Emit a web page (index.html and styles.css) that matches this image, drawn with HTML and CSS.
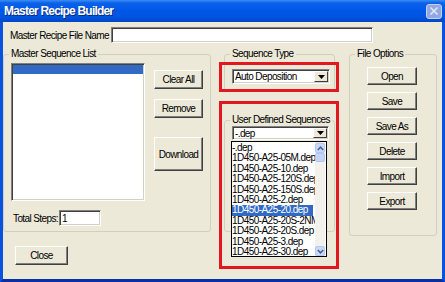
FILE: index.html
```html
<!DOCTYPE html>
<html lang="en">
<head>
  <meta charset="UTF-8" />
  <title>Master Recipe Builder</title>
  <link rel="stylesheet" href="styles.css">
</head>
<body>
  <div class="window">
    <div class="titlebar">
      <span class="title">Master Recipe Builder</span>
      <span class="close-x">
        <svg width="10" height="10" viewBox="0 0 10 10"><path d="M1.5 1.5 L8.5 8.5 M8.5 1.5 L1.5 8.5" stroke="#e2e8f7" stroke-width="1.6" fill="none"/></svg>
      </span>
    </div>

    <div class="frame">
      <div class="name-row">
        <label for="fileName" class="name-label">Master Recipe File Name</label>
        <input type="text" id="fileName" class="field name-field" />
      </div>

      <div class="main">
        <!-- left: sequence list -->
        <fieldset class="group seq-group">
          <legend>Master Sequence List</legend>
          <div class="seq-top">
            <div class="listbox"><div class="list-sel"></div></div>
            <div class="btn-col">
              <button class="btn btn-side">Clear All</button>
              <button class="btn btn-side">Remove</button>
              <button class="btn btn-side btn-tall">Download</button>
            </div>
          </div>
          <div class="steps-row">
            <label for="steps" class="steps-label">Total Steps:</label>
            <input type="text" id="steps" class="field steps-field" value="1" />
          </div>
        </fieldset>

        <!-- middle: type + user sequences -->
        <div class="mid-col">
          <fieldset class="group type-group">
            <legend>Sequence Type</legend>
            <div class="combo type-combo">
              <span class="combo-text">Auto Deposition</span>
              <span class="combo-btn"><svg width="7" height="4" viewBox="0 0 7 4"><path d="M0 0 H7 L3.5 4 Z" fill="#000"/></svg></span>
            </div>
          </fieldset>
          <fieldset class="group user-group">
            <legend>User Defined Sequences</legend>
            <div class="combo user-combo">
              <span class="combo-text">-.dep</span>
              <span class="combo-btn"><svg width="7" height="4" viewBox="0 0 7 4"><path d="M0 0 H7 L3.5 4 Z" fill="#000"/></svg></span>
            </div>
          </fieldset>
        </div>

        <!-- right: file options -->
        <fieldset class="group file-group">
          <legend>File Options</legend>
          <div class="file-btns">
            <button class="btn btn-file">Open</button>
            <button class="btn btn-file">Save</button>
            <button class="btn btn-file">Save As</button>
            <button class="btn btn-file">Delete</button>
            <button class="btn btn-file">Import</button>
            <button class="btn btn-file">Export</button>
          </div>
        </fieldset>
      </div>

      <div class="bottom-row">
        <button class="btn close-btn">Close</button>
      </div>

      <!-- open dropdown of User Defined Sequences -->
      <div class="popup">
        <div class="popup-items">
          <div class="item">-.dep</div>
          <div class="item">1D450-A25-05M.dep</div>
          <div class="item">1D450-A25-10.dep</div>
          <div class="item">1D450-A25-120S.dep</div>
          <div class="item">1D450-A25-150S.dep</div>
          <div class="item">1D450-A25-2.dep</div>
          <div class="item selected">1D450-A25-20.dep</div>
          <div class="item">1D450-A25-20S-2NM.dep</div>
          <div class="item">1D450-A25-20S.dep</div>
          <div class="item">1D450-A25-3.dep</div>
          <div class="item">1D450-A25-30.dep</div>
        </div>
        <div class="scroll">
          <span class="scroll-btn"><svg width="7" height="5" viewBox="0 0 7 5"><path d="M0.8 4 L3.5 1.2 L6.2 4" stroke="#4d6185" stroke-width="1.5" fill="none"/></svg></span>
          <span class="scroll-thumb"></span>
          <span class="scroll-track"></span>
          <span class="scroll-btn"><svg width="7" height="5" viewBox="0 0 7 5"><path d="M0.8 1 L3.5 3.8 L6.2 1" stroke="#4d6185" stroke-width="1.5" fill="none"/></svg></span>
        </div>
      </div>

      <!-- red highlight annotations -->
      <div class="mark mark-type"></div>
      <div class="mark mark-user"></div>
    </div>
  </div>
</body>
</html>
```

FILE: styles.css
```css
* {
  box-sizing: border-box;
}

body {
  margin: 0;
  font-family: "Liberation Sans", Arial, sans-serif;
  font-size: 10px;
  letter-spacing: -0.6px;
  color: #000;
  background: #fff;
}

.window {
  width: 445px;
  height: 282px;
}

/* title bar */
.titlebar {
  height: 22px;
  display: flex;
  align-items: center;
  justify-content: space-between;
  padding: 0 3px 0 4px;
  background: linear-gradient(to bottom, #3d8df5 0, #0a62e8 3px, #0058e8 10px, #0054e0 17px, #0046c6 22px);
  color: #fff;
}

.title {
  font-weight: bold;
  font-size: 12px;
  letter-spacing: -0.8px;
  text-shadow: 1px 1px 0 #0b2a7a;
}

.close-x {
  width: 16px;
  height: 15px;
  display: flex;
  align-items: center;
  justify-content: center;
  background: #93a8e2;
  border: 1px solid #c6d2f2;
  border-radius: 3px;
}

/* dialog body */
.frame {
  position: relative;
  height: 260px;
  background: #ece9d8;
  border: 3px solid #0a52e0;
  border-top: 0;
  border-bottom-color: #0830a6;
  white-space: nowrap;
}

.name-row {
  display: flex;
  align-items: center;
  padding-top: 5px;
  height: 21px;
}

.name-label {
  width: 101px;
  margin-left: 7px;
}

.field {
  margin: 0;
  padding: 0 2px;
  font: inherit;
  letter-spacing: inherit;
  color: #000;
  background: #fff;
  border: 1px solid;
  border-color: #808080 #fff #fff #808080;
  box-shadow: inset 1px 1px 0 #404040, inset -1px -1px 0 #d4d0c8;
  outline: none;
}

.name-field {
  width: 262px;
  height: 16px;
}

.main {
  display: flex;
  align-items: flex-start;
  margin-top: 5px;
}

/* group boxes */
.group {
  margin: 0;
  padding: 0;
  min-width: 0;
  border: 1px solid #d0d0bf;
  border-radius: 3px;
}

.group legend {
  margin-left: 5px;
  padding: 0 2px;
  line-height: 12px;
}

.seq-group {
  width: 208px;
  height: 184px;
}

.seq-top {
  display: flex;
  align-items: flex-start;
}

.listbox {
  width: 134px;
  height: 138px;
  margin: 3px 0 0 7px;
  background: #fff;
  border: 1px solid;
  border-color: #808080 #fff #fff #808080;
  box-shadow: inset 1px 1px 0 #404040, inset -1px -1px 0 #d4d0c8;
  padding: 1px;
}

.list-sel {
  height: 9px;
  background: #316ac5;
}

.btn-col {
  display: flex;
  flex-direction: column;
  margin: 10px 0 0 9px;
}

.btn {
  margin: 0;
  padding: 0;
  font: inherit;
  letter-spacing: inherit;
  color: #000;
  background: #ece9d8;
  border: 1px solid;
  border-color: #fff #404040 #404040 #fff;
  box-shadow: inset -1px -1px 0 #808080;
  border-radius: 0;
}

.btn-side {
  width: 49px;
  height: 19px;
  margin-bottom: 10px;
}

.btn-side:nth-child(2) {
  margin-bottom: 19px;
}

.btn-tall {
  height: 34px;
}

.steps-row {
  display: flex;
  align-items: center;
  margin: 9px 0 0 9px;
}

.steps-label {
  width: 46px;
}

.steps-field {
  width: 42px;
  height: 16px;
}

.mid-col {
  width: 111px;
  margin-left: 13px;
}

.type-group {
  height: 44px;
}

.user-group {
  height: 118px;
  margin-top: 22px;
}

.combo {
  display: flex;
  align-items: center;
  justify-content: space-between;
  margin-left: 7px;
  background: #fff;
  border: 1px solid;
  border-color: #808080 #fff #fff #808080;
  box-shadow: inset 1px 1px 0 #404040, inset -1px -1px 0 #d4d0c8;
  padding: 1px 1px 1px 2px;
}

.type-combo {
  width: 98px;
  height: 15px;
  margin-top: 9px;
}

.user-combo {
  width: 97px;
  height: 14px;
}

.combo-btn {
  width: 14px;
  height: 100%;
  display: flex;
  align-items: center;
  justify-content: center;
  background: #ece9d8;
  border: 1px solid;
  border-color: #fff #404040 #404040 #fff;
}

.file-group {
  width: 88px;
  height: 188px;
  margin-left: 14px;
}

.file-btns {
  display: flex;
  flex-direction: column;
  gap: 7px;
  padding: 7px 0 0 17px;
}

.btn-file {
  width: 50px;
  height: 18px;
}

.bottom-row {
  margin: 10px 0 0 12px;
}

.close-btn {
  width: 53px;
  height: 19px;
}

/* open drop-down list */
.popup {
  position: absolute;
  left: 228px;
  top: 119px;
  width: 96px;
  height: 116px;
  display: flex;
  background: #fff;
  border: 1px solid #000;
}

.popup-items {
  width: 83px;
  overflow: hidden;
  padding-top: 1px;
}

.item {
  height: 10.4px;
  line-height: 10.4px;
  letter-spacing: -0.55px;
  margin-right: 2px;
}

.item.selected {
  background: #316ac5;
  color: #fff;
}

.scroll {
  width: 10px;
  display: flex;
  flex-direction: column;
  background: #f3f1ec;
  padding-top: 1px;
}

.scroll-btn {
  height: 10px;
  display: flex;
  align-items: center;
  justify-content: center;
  background: #c8d8fa;
  border: 1px solid #b4c8f6;
  border-radius: 2px;
}

.scroll-thumb {
  height: 9px;
  background: #c4d5fb;
  border: 1px solid #b0c6f4;
  border-radius: 2px;
}

.scroll-track {
  flex: 1;
}

/* red annotation boxes */
.mark {
  position: absolute;
  border: 3px solid #e3171f;
}

.mark-type {
  left: 216px;
  top: 40px;
  width: 120px;
  height: 30px;
}

.mark-user {
  left: 216px;
  top: 79px;
  width: 120px;
  height: 168px;
}
```
